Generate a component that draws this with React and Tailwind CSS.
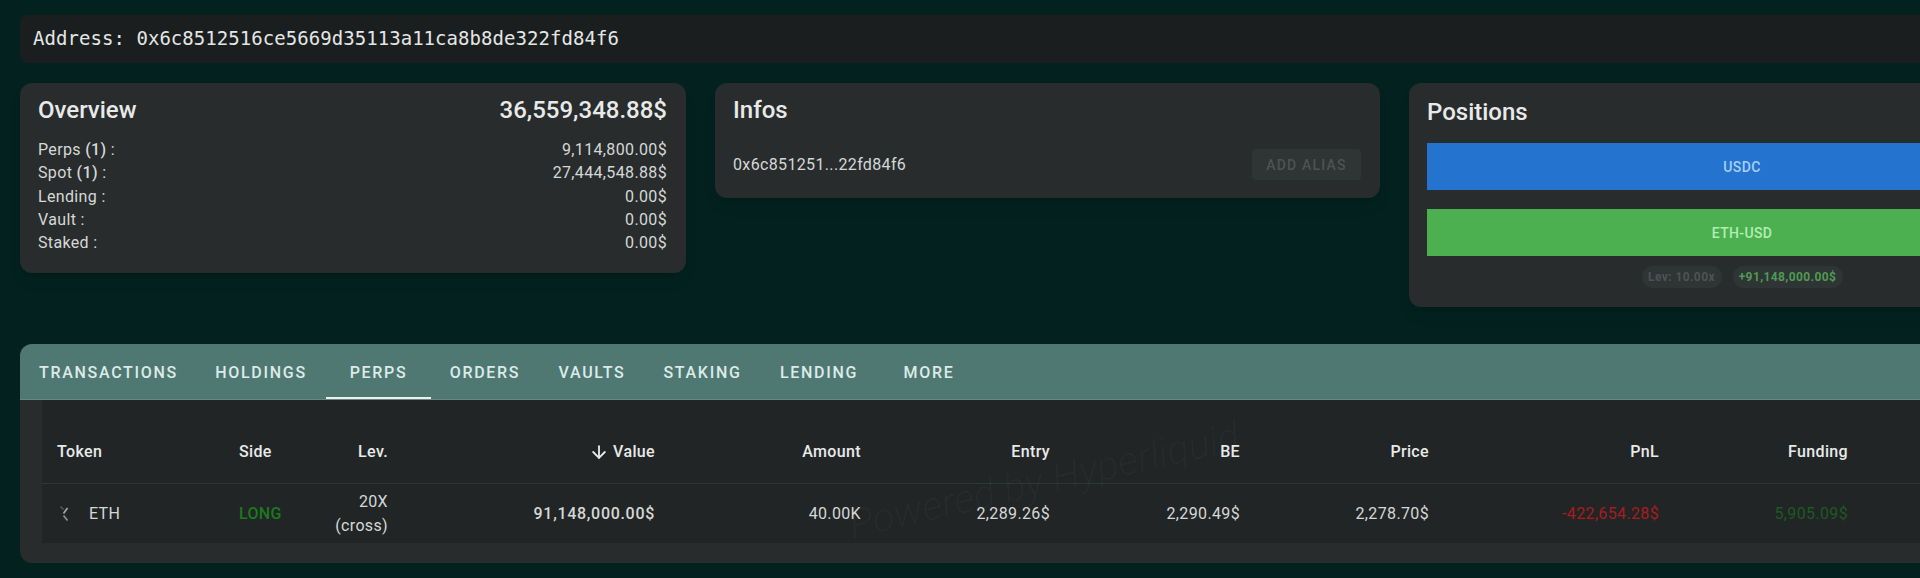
import { ArrowDown } from "lucide-react";

const tabs = [
  { label: "TRANSACTIONS", width: "w-[175px]" },
  { label: "HOLDINGS", width: "w-[130px]" },
  { label: "PERPS", width: "w-[105px]", active: true },
  { label: "ORDERS", width: "w-[108px]" },
  { label: "VAULTS", width: "w-[106px]" },
  { label: "STAKING", width: "w-[115px]" },
  { label: "LENDING", width: "w-[118px]" },
  { label: "MORE", width: "w-[102px]" },
];

const balances = [
  { label: "Perps", count: "(1)", value: "9,114,800.00$" },
  { label: "Spot", count: "(1)", value: "27,444,548.88$" },
  { label: "Lending", value: "0.00$" },
  { label: "Vault", value: "0.00$" },
  { label: "Staked", value: "0.00$" },
];

const gridCols =
  "grid grid-cols-[182px_85px_64px_267px_206px_189px_190px_189px_230px_189px] items-center";

const EthMark = () => (
  <svg width="14" height="20" viewBox="0 0 14 20" fill="none" className="shrink-0">
    <path d="M3.5 2.5 L6.5 5.5" stroke="#585d5d" strokeWidth="1.4" />
    <path d="M10.5 4 L6.5 9.5" stroke="#a3a7a7" strokeWidth="1.7" />
    <path d="M6.5 11.5 L10.5 16.5" stroke="#8d9191" strokeWidth="1.7" />
  </svg>
);

const App = () => {
  return (
    <div className="h-[578px] w-[1920px] overflow-hidden bg-[#03221f] font-['Roboto',sans-serif] tracking-[0.35px] text-[#e8eaea]">
      <div className="flex w-[2092px] flex-col pl-[20px] pt-[15px]">
        <div className="flex h-[48px] items-center rounded-l-lg bg-[#1b1e1e] pb-[2px] pl-[13px] font-['DejaVu_Sans_Mono',monospace] text-[19px] tracking-[0.05px] text-[#e4e6e6]">
          Address: 0x6c8512516ce5669d35113a11ca8b8de322fd84f6
        </div>

        <div className="mt-[20px] flex h-[224px] items-start gap-[29px]">
          <div className="h-[190px] w-[666px] rounded-xl bg-[#282c2c] pl-[18px] pr-[19px] pt-[12px] shadow-lg">
            <div className="flex h-[30px] items-center justify-between text-2xl font-medium tracking-normal">
              <span>Overview</span>
              <span>36,559,348.88$</span>
            </div>
            <div className="mt-[13px] text-base leading-[23.3px] text-[#d5d8d8]">
              {balances.map((row) => (
                <div key={row.label} className="flex justify-between">
                  <span>
                    {row.label} {row.count && <b className="font-medium">{row.count} </b>}:
                  </span>
                  <span>{row.value}</span>
                </div>
              ))}
            </div>
          </div>

          <div className="h-[115px] w-[665px] rounded-xl bg-[#282c2c] pl-[18px] pr-[19px] pt-[12px] shadow-lg">
            <div className="flex h-[30px] items-center text-2xl font-medium tracking-normal">Infos</div>
            <div className="mt-[24px] flex h-[31px] items-center justify-between text-base text-[#d5d8d8]">
              <span>0x6c851251...22fd84f6</span>
              <button className="h-[31px] w-[109px] rounded bg-[#2f3434] text-sm font-medium tracking-[1.2px] text-[#4d5353]">
                ADD ALIAS
              </button>
            </div>
          </div>

          <div className="h-[224px] w-[666px] rounded-xl bg-[#282c2c] px-[18px] pt-[14px] shadow-lg">
            <div className="flex h-[30px] items-center text-2xl font-medium tracking-normal">Positions</div>
            <div className="mt-[16px] flex h-[47px] items-center justify-center bg-[#2473cf] text-sm font-medium text-[#a5d0f8]">
              USDC
            </div>
            <div className="mt-[19px] flex h-[47px] items-center justify-center bg-[#4cb050] text-sm font-medium text-[#b2eeb4]">
              ETH-USD
            </div>
            <div className="mt-[10px] flex justify-center gap-[11px] text-xs font-bold tracking-[0.4px]">
              <span className="flex h-[22px] w-[80px] items-center justify-center rounded-full bg-[#2f3434] text-[#4d5353]">
                Lev: 10.00x
              </span>
              <span className="flex h-[22px] w-[110px] items-center justify-center rounded-full bg-[#2f3434] text-[#4f9a55]">
                +91,148,000.00$
              </span>
            </div>
          </div>
        </div>

        <div className="relative mt-[37px] h-[219px] overflow-hidden rounded-l-xl bg-[#282c2c]">
          <div className="flex h-[56px] items-stretch border-b border-[#6a8783] bg-[#4f7872]">
            {tabs.map((tab) => (
              <div
                key={tab.label}
                className={`${tab.width} relative flex items-center justify-center pt-[2px] text-base font-medium tracking-[1.7px] text-[#dcebe8] first:ml-[1px]`}
              >
                {tab.label}
                {tab.active && <div className="absolute bottom-0 h-[2px] w-full bg-[#e8f2f0]" />}
              </div>
            ))}
          </div>

          <div className="ml-[22px] h-[143px] bg-[#222525] pl-[15px] text-base">
            <div className={`${gridCols} h-[83px] pt-[20px] font-medium text-[#e8eaea]`}>
              <span>Token</span>
              <span>Side</span>
              <span className="text-right">Lev.</span>
              <span className="flex items-center justify-end gap-[4px]">
                <ArrowDown size={20} strokeWidth={2.2} />
                Value
              </span>
              <span className="text-right">Amount</span>
              <span className="text-right">Entry</span>
              <span className="text-right">BE</span>
              <span className="text-right">Price</span>
              <span className="text-right">PnL</span>
              <span className="text-right">Funding</span>
            </div>
            <div className="-ml-[15px] h-px bg-[#303535]" />
            <div className={`${gridCols} h-[59px] text-[#d5d8d8]`}>
              <span className="flex items-center gap-[18px]">
                <EthMark />
                ETH
              </span>
              <span className="font-medium text-[#1a7a1e]">LONG</span>
              <span className="text-right leading-[24px]">
                20X
                <br />
                (cross)
              </span>
              <span className="text-right font-medium tracking-[0.7px]">91,148,000.00$</span>
              <span className="text-right">40.00K</span>
              <span className="text-right">2,289.26$</span>
              <span className="text-right">2,290.49$</span>
              <span className="text-right">2,278.70$</span>
              <span className="text-right text-[#a81c1f]">-422,654.28$</span>
              <span className="text-right text-[#1c5a22]">5,905.09$</span>
            </div>
          </div>

          {/* watermark lying over the table */}
          <div className="pointer-events-none absolute left-[824px] top-[107px] w-[400px] -rotate-[13deg] whitespace-nowrap text-center text-[40px] font-light italic tracking-normal text-white/[0.03]">
            Powered by Hyperliquid
          </div>
        </div>
      </div>
    </div>
  );
};

export default App;
